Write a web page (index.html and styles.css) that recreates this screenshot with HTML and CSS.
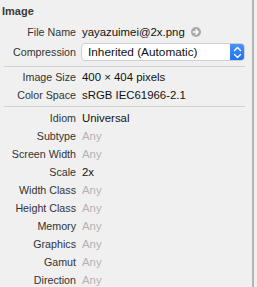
FILE: index.html
```html
<!DOCTYPE html>
<html lang="en">
<head>
    <meta charset="UTF-8">
    <title>Image Inspector</title>
    <link rel="stylesheet" href="styles.css">
</head>
<body>
    <div class="inspector">
        <h2 class="section-title">Image</h2>

        <div class="row first">
            <span class="label">File Name</span>
            <span class="value">yayazuimei@2x.png
                <svg class="goto" width="10" height="10" viewBox="0 0 10 10">
                    <circle cx="5" cy="5" r="5" fill="#a9a9a9"/>
                    <path d="M2.3 5h4.6M4.9 2.8L7.1 5 4.9 7.2" stroke="#fff" stroke-width="1.5" fill="none" stroke-linecap="round" stroke-linejoin="round"/>
                </svg>
            </span>
        </div>
        <div class="row">
            <span class="label">Compression</span>
            <div class="popup">
                <span class="popup-text">Inherited (Automatic)</span>
                <span class="stepper">
                    <svg width="9" height="13" viewBox="0 0 9 13">
                        <path d="M1.5 4.5L4.5 1.5 7.5 4.5M1.5 8.5L4.5 11.5 7.5 8.5" stroke="#fff" stroke-width="1.4" fill="none" stroke-linecap="round" stroke-linejoin="round"/>
                    </svg>
                </span>
            </div>
        </div>

        <div class="divider top-gap"></div>

        <div class="row tight">
            <span class="label">Image Size</span>
            <span class="value">400 × 404 pixels</span>
        </div>
        <div class="row">
            <span class="label">Color Space</span>
            <span class="value">sRGB IEC61966-2.1</span>
        </div>

        <div class="divider mid-gap"></div>

        <div class="row after-divider">
            <span class="label">Idiom</span>
            <span class="value">Universal</span>
        </div>
        <div class="row"><span class="label">Subtype</span><span class="value muted">Any</span></div>
        <div class="row"><span class="label">Screen Width</span><span class="value muted">Any</span></div>
        <div class="row"><span class="label">Scale</span><span class="value">2x</span></div>
        <div class="row"><span class="label">Width Class</span><span class="value muted">Any</span></div>
        <div class="row"><span class="label">Height Class</span><span class="value muted">Any</span></div>
        <div class="row"><span class="label">Memory</span><span class="value muted">Any</span></div>
        <div class="row"><span class="label">Graphics</span><span class="value muted">Any</span></div>
        <div class="row"><span class="label">Gamut</span><span class="value muted">Any</span></div>
        <div class="row"><span class="label">Direction</span><span class="value muted">Any</span></div>
    </div>
</body>
</html>
```

FILE: styles.css
```css
html, body {
    margin: 0;
    height: 100%;
    background-color: #f0f0f0;
}
body {
    font-family: "Liberation Sans", Arial, sans-serif;
    font-size: 11px;
    color: #222;
    overflow: hidden;
}
.inspector {
    width: 254px;
    height: 100%;
    box-sizing: border-box;
    border-right: 2px solid #b4b4b4;
    padding: 0 7px 0 4px;
}
.section-title {
    margin: 0 0 0 -2px;
    height: 22px;
    line-height: 22px;
    font-size: 11px;
    font-weight: bold;
    color: #3a3a3a;
}
.row {
    display: grid;
    grid-template-columns: 72px 1fr;
    column-gap: 6px;
    align-items: center;
    height: 18px;
}
.row.first,
.row.first + .row {
    height: 20px;
}
.row.tight {
    margin-top: 1px;
}
.row.after-divider {
    margin-top: 2px;
}
.label {
    text-align: right;
    font-size: 10.7px;
    color: #333;
    white-space: nowrap;
}
.value {
    font-size: 11.4px;
    color: #111;
    white-space: nowrap;
    display: flex;
    align-items: center;
    gap: 6px;
}
.value.muted {
    color: #b3b3b3;
}
.goto {
    display: block;
}
.popup {
    margin-left: -1px;
    height: 18px;
    box-sizing: border-box;
    border: 1px solid #cfcfcf;
    border-radius: 4px;
    background: #fff;
    display: flex;
    align-items: center;
    justify-content: space-between;
    overflow: hidden;
}
.popup-text {
    padding-left: 6px;
    font-size: 11.8px;
    color: #111;
}
.stepper {
    width: 15px;
    height: 18px;
    margin: -1px -1px -1px 0;
    border-radius: 0 4px 4px 0;
    background: linear-gradient(#4b97f8, #1b6ef3);
    display: flex;
    align-items: center;
    justify-content: center;
}
.divider {
    height: 1px;
    background-color: #d2d2d2;
}
.divider.top-gap {
    margin-top: 4px;
}
.divider.mid-gap {
    margin-top: 2px;
}
```
